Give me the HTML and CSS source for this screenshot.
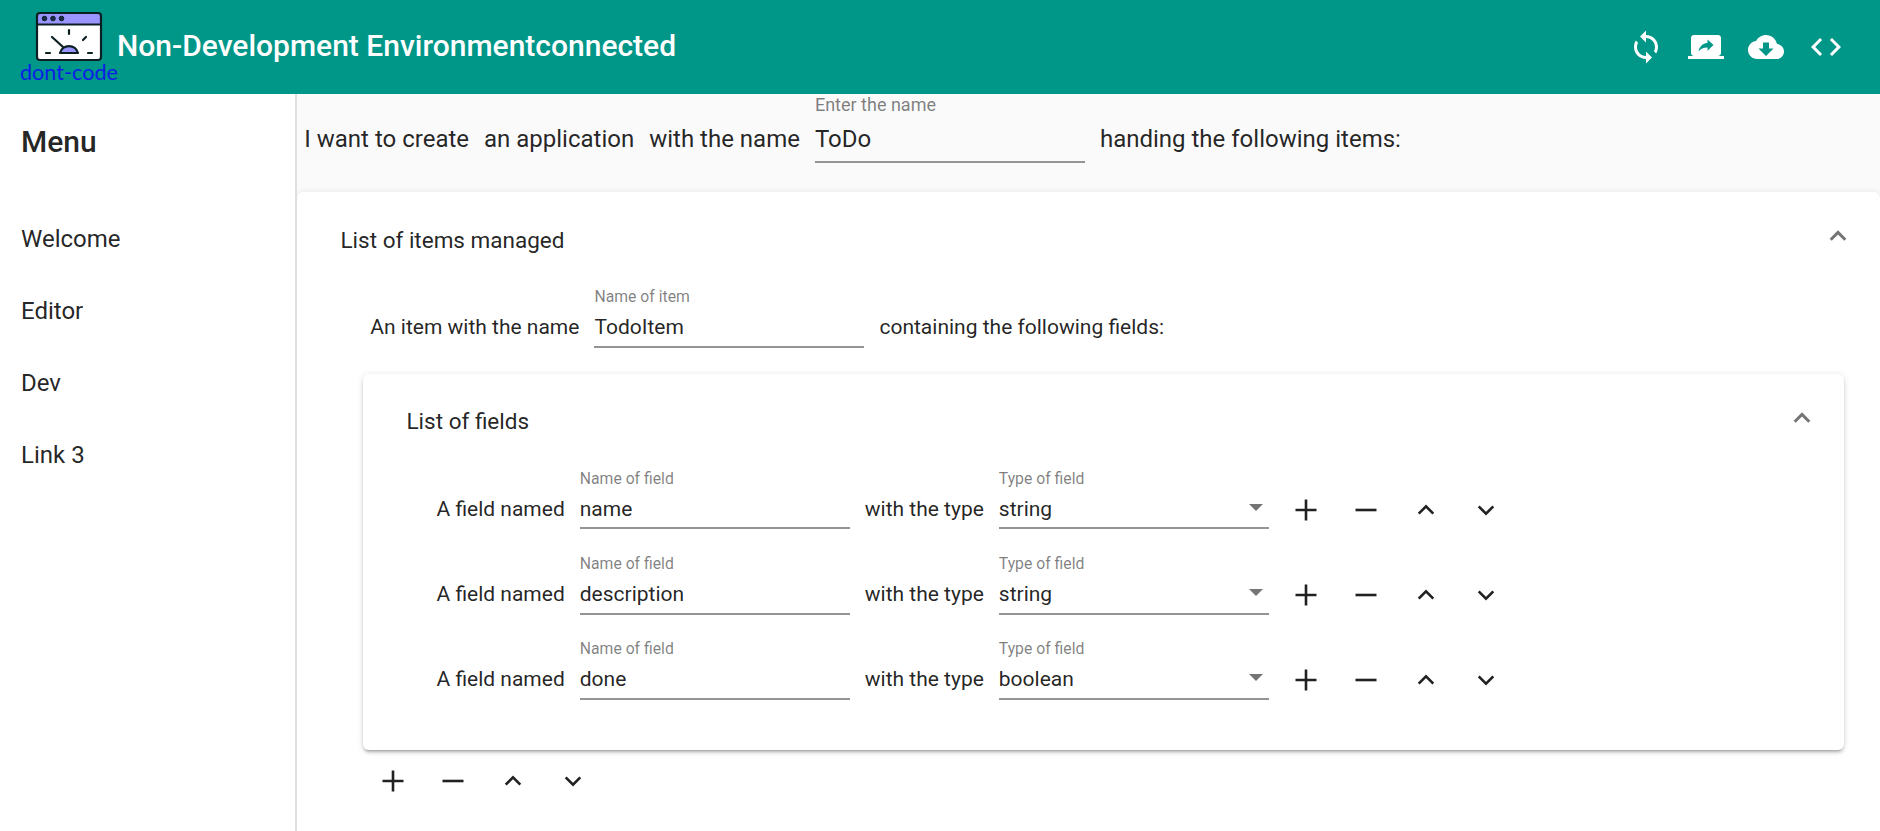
FILE: index.html
```html
<!DOCTYPE html>
<html lang="en">
<head>
<meta charset="utf-8">
<title>Non-Development Environment</title>
<link rel="stylesheet" href="styles.css">
</head>
<body>
<svg class="defs" aria-hidden="true">
  <symbol id="add" viewBox="0 0 36 36"><path d="M7.5 18h21M18 7.5v21"/></symbol>
  <symbol id="remove" viewBox="0 0 36 36"><path d="M7.5 18h21"/></symbol>
  <symbol id="up" viewBox="0 0 36 36"><path d="M10.700 21.700 18 14.400 25.300 21.700"/></symbol>
  <symbol id="down" viewBox="0 0 36 36"><path d="M10.700 14.400 18 21.700l7.300-7.300"/></symbol>
</svg>
<header class="toolbar">
  <svg class="logo" viewBox="0 0 98 74">
    <rect x="16" y="1" width="64" height="47" rx="3" fill="#fff"/>
    <path d="M16 13V4a3 3 0 0 1 3-3h58a3 3 0 0 1 3 3v9z" fill="#9a94ff"/>
    <g fill="none" stroke="#0c2024" stroke-width="2.200" stroke-linecap="round" stroke-linejoin="round">
      <rect x="16" y="1" width="64" height="47" rx="3"/>
      <path d="M16 12.500h64M31 25l11 10M48 18v4M65 25l-3 3M25 41h4M67 41h4"/>
      <path d="M39 41a9.300 9.300 0 0 1 18 0z" fill="#9a94ff"/>
    </g>
    <g fill="#1b2a4a" stroke="#0c2024"><circle cx="23.500" cy="6.500" r="2.300"/><circle cx="32" cy="6.500" r="2.300"/><circle cx="40.500" cy="6.500" r="2.300"/></g>
    <text class="logo-text" x="-1" y="67.500" textLength="98" lengthAdjust="spacingAndGlyphs">dont-code</text>
  </svg>
  <h1 class="title">Non-Development Environmentconnected</h1>
  <nav class="actions">
    <svg viewBox="0 0 24 24"><path d="M12 4V1L8 5l4 4V6c3.310 0 6 2.690 6 6 0 1.010-.25 1.970-.7 2.800l1.460 1.460C19.540 15.030 20 13.570 20 12c0-4.420-3.580-8-8-8zm0 14c-3.310 0-6-2.690-6-6 0-1.010.25-1.970.7-2.800L5.240 7.740C4.460 8.970 4 10.430 4 12c0 4.420 3.580 8 8 8v3l4-4-4-4v3z"/></svg>
    <svg viewBox="0 0 24 24"><path d="M20 18c1.100 0 1.990-.9 1.990-2L22 6c0-1.110-.9-2-2-2H4c-1.110 0-2 .89-2 2v10c0 1.100.89 2 2 2H0v2h24v-2h-4zm-7-3.530v-2.190c-2.780 0-4.610.85-6 2.720.56-2.670 2.110-5.330 6-5.870V7l4 3.730-4 3.740z"/></svg>
    <svg viewBox="0 0 24 24"><path d="M19.350 10.040C18.670 6.590 15.640 4 12 4 9.110 4 6.600 5.640 5.350 8.040 2.340 8.360 0 10.910 0 14c0 3.310 2.690 6 6 6h13c2.760 0 5-2.240 5-5 0-2.640-2.050-4.780-4.650-4.960zM17 13l-5 5-5-5h3V9h4v4h3z"/></svg>
    <svg viewBox="0 0 24 24"><path d="M9.400 16.600 4.800 12l4.600-4.600L8 6l-6 6 6 6 1.400-1.400zm5.200 0 4.600-4.600-4.600-4.600L16 6l6 6-6 6-1.400-1.400z"/></svg>
  </nav>
</header>
<div class="body">
  <aside class="sidebar">
    <h2 class="menu-title">Menu</h2>
    <a class="link">Welcome</a>
    <a class="link">Editor</a>
    <a class="link">Dev</a>
    <a class="link">Link 3</a>
  </aside>
  <main class="content">
    <div class="row intro">
      <span>I want to create</span><span>an application</span><span>with the name</span>
      <label class="field"><span class="label">Enter the name</span><span class="value">ToDo</span></label>
      <span>handing the following items:</span>
    </div>
    <section class="panel outer">
      <div class="panel-head"><span>List of items managed</span><svg class="icon toggle"><use href="#up"/></svg></div>
      <div class="row item">
        <span>An item with the name</span>
        <label class="field"><span class="label">Name of item</span><span class="value">TodoItem</span></label>
        <span>containing the following fields:</span>
      </div>
      <section class="panel inner">
        <div class="panel-head"><span>List of fields</span><svg class="icon toggle"><use href="#up"/></svg></div>
        <div class="rows">
          <div class="row">
            <span>A field named</span>
            <label class="field"><span class="label">Name of field</span><span class="value">name</span></label>
            <span>with the type</span>
            <label class="field"><span class="label">Type of field</span><span class="value select">string</span></label>
            <div class="tools"><svg class="icon"><use href="#add"/></svg><svg class="icon"><use href="#remove"/></svg><svg class="icon"><use href="#up"/></svg><svg class="icon"><use href="#down"/></svg></div>
          </div>
          <div class="row">
            <span>A field named</span>
            <label class="field"><span class="label">Name of field</span><span class="value">description</span></label>
            <span>with the type</span>
            <label class="field"><span class="label">Type of field</span><span class="value select">string</span></label>
            <div class="tools"><svg class="icon"><use href="#add"/></svg><svg class="icon"><use href="#remove"/></svg><svg class="icon"><use href="#up"/></svg><svg class="icon"><use href="#down"/></svg></div>
          </div>
          <div class="row">
            <span>A field named</span>
            <label class="field"><span class="label">Name of field</span><span class="value">done</span></label>
            <span>with the type</span>
            <label class="field"><span class="label">Type of field</span><span class="value select">boolean</span></label>
            <div class="tools"><svg class="icon"><use href="#add"/></svg><svg class="icon"><use href="#remove"/></svg><svg class="icon"><use href="#up"/></svg><svg class="icon"><use href="#down"/></svg></div>
          </div>
        </div>
      </section>
      <div class="tools item-tools"><svg class="icon"><use href="#add"/></svg><svg class="icon"><use href="#remove"/></svg><svg class="icon"><use href="#up"/></svg><svg class="icon"><use href="#down"/></svg></div>
    </section>
  </main>
</div>
</body>
</html>
```
FILE: styles.css
```css
* { box-sizing: border-box; }
body {
  margin: 0;
  height: 831px;
  overflow: hidden;
  display: flex;
  flex-direction: column;
  font-family: Roboto, sans-serif;
  font-size: 24px;
  color: rgba(0, 0, 0, .87);
  background: #fafafa;
}
.defs { display: none; }
.toolbar {
  flex: none;
  height: 94px;
  display: flex;
  align-items: center;
  padding: 0 36px 0 21px;
  background: #009688;
  color: #fff;
}
.logo { width: 98px; height: 74px; margin-top: 4px; overflow: visible; }
.logo-text { font: 20.5px Lato, sans-serif; fill: #0a1ee6; }
.title { margin: -3px 0 0 -2px; font-size: 30px; line-height: 48px; font-weight: 500; white-space: nowrap; }
.actions { margin-left: auto; display: flex; gap: 24px; }
.actions svg { width: 36px; height: 36px; fill: #fff; }
.body { flex: 1; min-height: 0; display: flex; }
.sidebar { width: 297px; flex: none; background: #fff; border-right: 2px solid #e0e0e0; }
.menu-title { margin: 0 0 13px; padding-left: 21px; font-size: 30px; font-weight: 500; line-height: 96px; }
.link { display: block; padding-left: 21px; line-height: 72px; }
.content { flex: 1; min-width: 0; overflow: hidden; }
.row { display: flex; align-items: flex-start; gap: 15px; white-space: nowrap; }
.row > span { line-height: 36px; }
.field { width: 270px; display: flex; flex-direction: column; border-bottom: 2px solid #949494; }
.label { color: rgba(0, 0, 0, .5); }
.value { display: flex; align-items: center; justify-content: space-between; }
.select::after {
  content: "";
  margin: -3px 6px 0 0;
  border: 7.5px solid transparent;
  border-top-color: #757575;
  border-bottom: 0;
}
.intro { height: 98px; padding-left: 7.3px; }
.intro > span { padding-top: 27px; }
.intro .field { height: 69px; }
.intro .label { font-size: 18px; line-height: 21px; }
.intro .value { margin-top: 6px; line-height: 36px; }
.panel { background: #fff; border-radius: 6px; box-shadow: 0 4px 2px -3px rgba(0, 0, 0, .2), 0 3px 3px rgba(0, 0, 0, .14), 0 1px 7px rgba(0, 0, 0, .12); }
.outer { height: 700px; padding: 0 36px 0 66px; }
.panel-head { height: 96px; display: flex; align-items: center; justify-content: space-between; font-size: 22.5px; }
.outer > .panel-head { margin: 0 -12px 0 -22.5px; }
.item, .rows { font-size: 21px; }
.item { height: 86px; padding-left: 7.3px; }
.item .field { height: 60px; }
.rows .field { height: 59.4px; }
.item > span, .rows .row > span { padding-top: 21px; }
.item .label, .rows .label { font-size: 15.75px; line-height: 18px; }
.item .value, .rows .value { margin-top: 6px; line-height: 30px; }
.inner { height: 376px; padding: 0 15px 0 43.5px; }
.inner > .panel-head { height: 93px; margin: 0 9px 2.9px 0; }
.inner .toggle { margin-top: -6px; }
.rows { padding-left: 30px; }
.rows .row { height: 85.25px; }
.tools { display: flex; gap: 24px; }
.row .tools { padding: 22px 0 0 4.5px; }
.icon { width: 36px; height: 36px; fill: none; stroke: #212121; stroke-width: 2.600; }
.toggle { stroke: #757575; stroke-width: 3; margin-top: -8px; }
.item-tools { padding: 13px 0 0 12px; }
```
